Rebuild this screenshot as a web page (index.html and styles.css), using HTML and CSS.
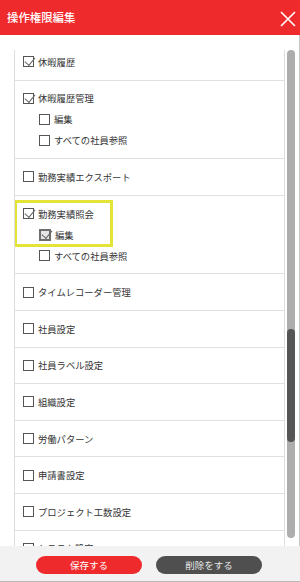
FILE: index.html
```html
<!DOCTYPE html>
<html lang="ja">
<head>
<meta charset="utf-8">
<title>操作権限編集</title>
<link rel="stylesheet" href="styles.css">
</head>
<body>
<div class="app">
  <header class="header">
    <h1 class="title">操作権限編集</h1>
    <button class="close" aria-label="閉じる">
      <svg width="16" height="16" viewBox="0 0 16 16"><path d="M1 1L15 15M15 1L1 15" stroke="#fff" stroke-width="1.6" fill="none"/></svg>
    </button>
  </header>
  <main class="main">
    <div class="viewport">
      <ul class="list">
        <li class="row">
          <label class="item"><span class="cb checked"></span><span class="label">休暇履歴</span></label>
        </li>
        <li class="row">
          <label class="item"><span class="cb checked"></span><span class="label">休暇履歴管理</span></label>
          <label class="item sub"><span class="cb"></span><span class="label">編集</span></label>
          <label class="item sub"><span class="cb"></span><span class="label">すべての社員参照</span></label>
        </li>
        <li class="row">
          <label class="item"><span class="cb"></span><span class="label">勤務実績エクスポート</span></label>
        </li>
        <li class="row marked">
          <label class="item"><span class="cb checked"></span><span class="label">勤務実績照会</span></label>
          <label class="item sub"><span class="cb checked focus"></span><span class="label">編集</span></label>
          <label class="item sub"><span class="cb"></span><span class="label">すべての社員参照</span></label>
          <span class="highlight"></span>
        </li>
        <li class="row">
          <label class="item"><span class="cb"></span><span class="label">タイムレコーダー管理</span></label>
        </li>
        <li class="row">
          <label class="item"><span class="cb"></span><span class="label">社員設定</span></label>
        </li>
        <li class="row">
          <label class="item"><span class="cb"></span><span class="label">社員ラベル設定</span></label>
        </li>
        <li class="row">
          <label class="item"><span class="cb"></span><span class="label">組織設定</span></label>
        </li>
        <li class="row">
          <label class="item"><span class="cb"></span><span class="label">労働パターン</span></label>
        </li>
        <li class="row">
          <label class="item"><span class="cb"></span><span class="label">申請書設定</span></label>
        </li>
        <li class="row">
          <label class="item"><span class="cb"></span><span class="label">プロジェクト工数設定</span></label>
        </li>
        <li class="row">
          <label class="item"><span class="cb"></span><span class="label">システム設定</span></label>
        </li>
      </ul>
    </div>
    <div class="scrollbar"><div class="thumb"></div></div>
  </main>
  <footer class="footer">
    <button class="btn save">保存する</button>
    <button class="btn delete">削除をする</button>
  </footer>
</div>
</body>
</html>
```

FILE: styles.css
```css
* { box-sizing: border-box; }
html, body { margin: 0; padding: 0; background: #fff; }
body {
  font-family: "Noto Sans CJK JP", "Noto Sans", sans-serif;
  color: #333;
}
.app {
  width: 300px;
  height: 582px;
  display: flex;
  flex-direction: column;
  overflow: hidden;
}
.header {
  height: 35px;
  flex: none;
  background: #ef2a2c;
  display: flex;
  align-items: center;
  justify-content: space-between;
  padding: 0 4px 0 7px;
}
.title {
  margin: 0;
  font-size: 11.4px;
  font-weight: 500;
  color: #fff;
  letter-spacing: 0;
  line-height: 1;
}
.close {
  border: 0;
  background: none;
  padding: 0;
  width: 16px;
  height: 16px;
  display: flex;
  margin-top: 2px;
}
.main {
  flex: 1;
  min-height: 0;
  display: flex;
  padding-left: 14px;
  border-right: 1px solid #c8c8c8;
}
.viewport {
  width: 271px;
  margin-top: 15px;
  overflow: hidden;
  border-left: 1px solid #dedede;
  border-right: 1px solid #dedede;
}
.list {
  list-style: none;
  margin: -6px 0 0;
  padding: 0;
}
.row {
  position: relative;
  padding: 9.8px 0 9.8px 8px;
  border-bottom: 1px solid #e0e0e0;
  display: flex;
  flex-direction: column;
  gap: 5px;
}
.item {
  height: 16px;
  display: flex;
  align-items: center;
  gap: 4px;
  font-size: 9.3px;
  color: #333;
  line-height: 16px;
}
.item.sub { padding-left: 16px; }
.cb {
  width: 11px;
  height: 11px;
  flex: none;
  border: 1px solid #555;
  background: #fff;
  position: relative;
}
.cb.checked::after {
  content: "";
  position: absolute;
  left: 3px;
  top: -2px;
  width: 4.5px;
  height: 9px;
  border-right: 1px solid #666;
  border-bottom: 1px solid #666;
  transform: rotate(40deg);
  transform-origin: center;
}
.cb.focus {
  width: 12px;
  height: 12px;
  border: 2px solid #6e6e6e;
  background: #e6e6e6;
}
.cb.focus::after {
  left: 2.5px;
  top: -2.5px;
}
.highlight {
  position: absolute;
  left: -1px;
  top: 4px;
  width: 99px;
  height: 47px;
  border: 3px solid #e4e338;
  pointer-events: none;
}
.scrollbar {
  width: 8px;
  height: 488px;
  margin: 15px 0 0 2px;
  border-radius: 4px;
  background: #adadad;
  position: relative;
}
.thumb {
  position: absolute;
  left: 0;
  top: 279px;
  width: 8px;
  height: 113px;
  border-radius: 4px;
  background: #555;
}
.footer {
  height: 36px;
  flex: none;
  background: #f2f2f2;
  border-bottom: 1px solid #b8b8b8;
  display: flex;
  justify-content: center;
  align-items: flex-start;
  gap: 14px;
  padding-top: 10px;
  padding-right: 2px;
}
.btn {
  width: 106px;
  height: 18px;
  border: 0;
  border-radius: 9px;
  font-family: "Noto Sans CJK JP", "Noto Sans", sans-serif;
  font-size: 9.5px;
  line-height: 18px;
  padding: 0;
  color: #fff;
}
.btn.save { background: #ef2a2c; }
.btn.delete { background: #4f4f4f; color: #e8e8e8; }
```
